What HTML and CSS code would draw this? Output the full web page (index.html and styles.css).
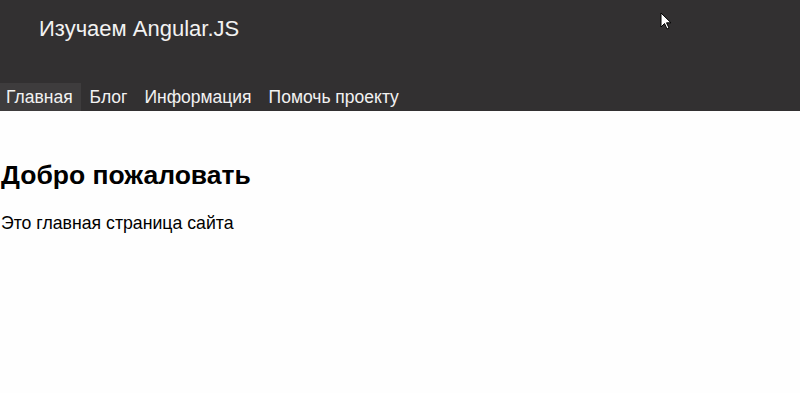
FILE: index.html
```html
<!DOCTYPE html>
<html>
<head>
    <title>Изучаем Angular.JS</title>
    <meta name="viewport" content="width=device-width, initial-scale=1.0">
    <link rel="stylesheet" href="styles.css">
</head>
<body>
    <div id="header">
        <div class="title">Изучаем Angular.JS</div>
        <ul class="menu">
            <li class="active">Главная</li>
            <li>Блог</li>
            <li>Информация</li>
            <li>Помочь проекту</li>
        </ul>
    </div>
    <div id="content">
        <h1>Добро пожаловать</h1>
        <p>Это главная страница сайта</p>
    </div>
    <svg class="cursor" width="12" height="19" viewBox="0 0 12 19">
        <path d="M1 1 L1 15 L4.5 11.5 L7 17 L9 16 L6.5 10.8 L11 10.8 Z" fill="#fff" stroke="#000" stroke-width="1"/>
    </svg>
</body>
</html>
```

FILE: styles.css
```css
body {
    font-family: "Liberation Sans", Arial, sans-serif;
    margin: 0;
    padding: 0;
    background-color: #fefefe;
    color: #000;
}
#header {
    background-color: #323031;
    color: #f2f2f2;
    height: 111px;
    display: flex;
    flex-direction: column;
    justify-content: space-between;
}
.title {
    font-size: 22px;
    padding: 16px 0 0 39px;
}
.menu {
    list-style: none;
    margin: 0;
    padding: 0;
    display: flex;
    gap: 3px;
}
.menu li {
    font-size: 17.5px;
    line-height: 28px;
    padding: 0 8px 0 6px;
    cursor: pointer;
}
.menu li.active {
    background-color: #3e3c3d;
}
#content {
    padding: 0 1px;
}
h1 {
    font-size: 26.5px;
    margin: 49px 0 0;
}
p {
    font-size: 17.7px;
    margin: 22px 0 0;
}
.cursor {
    position: absolute;
    left: 660px;
    top: 12px;
}
```
